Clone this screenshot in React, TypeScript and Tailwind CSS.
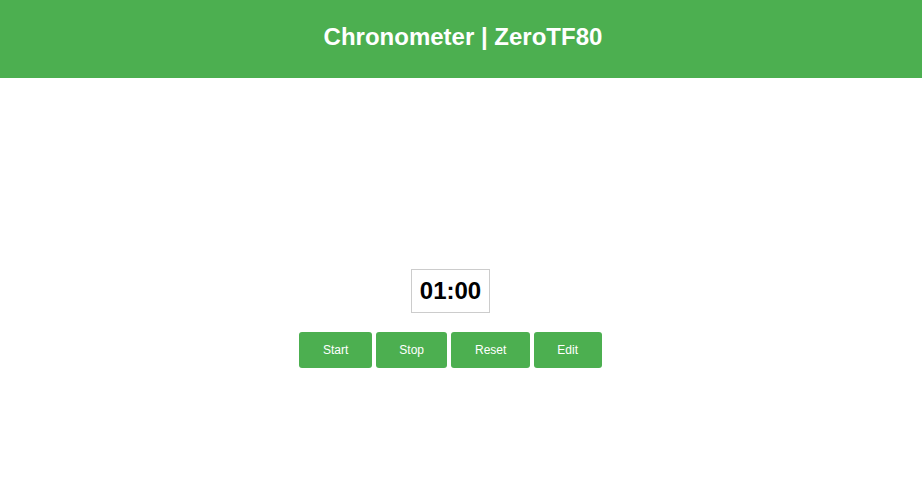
import { useEffect, useRef, useState } from "react"

function fmt(total: number) {
  const m = Math.floor(total / 60)
  const s = total % 60
  return `${m.toString().padStart(2, "0")}:${s.toString().padStart(2, "0")}`
}

export default function App() {
  const [seconds, setSeconds] = useState(60)
  const [running, setRunning] = useState(false)
  const timer = useRef<number | null>(null)

  useEffect(() => {
    if (!running) return
    timer.current = window.setInterval(() => {
      setSeconds((s) => (s > 0 ? s - 1 : 0))
    }, 1000)
    return () => {
      if (timer.current) window.clearInterval(timer.current)
    }
  }, [running])

  const buttons: { label: string; onClick: () => void }[] = [
    { label: "Start", onClick: () => setRunning(true) },
    { label: "Stop", onClick: () => setRunning(false) },
    {
      label: "Reset",
      onClick: () => {
        setRunning(false)
        setSeconds(60)
      },
    },
    {
      label: "Edit",
      onClick: () => {
        const v = window.prompt("Minutes", "1")
        if (v && !isNaN(Number(v))) setSeconds(Math.round(Number(v) * 60))
      },
    },
  ]

  return (
    <div
      className="min-h-screen bg-white"
      style={{ fontFamily: '"Liberation Sans", Arial, sans-serif' }}
    >
      <header className="h-[78px] bg-[#4caf50] flex items-center justify-center pb-[4px] pl-[4px]">
        <h1 className="text-[24px] font-bold text-white leading-[28px]">Chronometer | ZeroTF80</h1>
      </header>

      <main className="flex flex-col items-center pt-[191px] pr-[21px]">
        <div className="border border-[#cccccc] px-[7.5px] py-[7px] text-[24px] leading-[28px] font-bold text-black">
          {fmt(seconds)}
        </div>
        <div className="flex gap-[4px] mt-[19px]">
          {buttons.map((b) => (
            <button
              key={b.label}
              onClick={b.onClick}
              className="bg-[#4caf50] text-white text-[12px] leading-[14px] px-[23.5px] py-[11px] rounded-[3px] cursor-pointer"
            >
              {b.label}
            </button>
          ))}
        </div>
      </main>
    </div>
  )
}
